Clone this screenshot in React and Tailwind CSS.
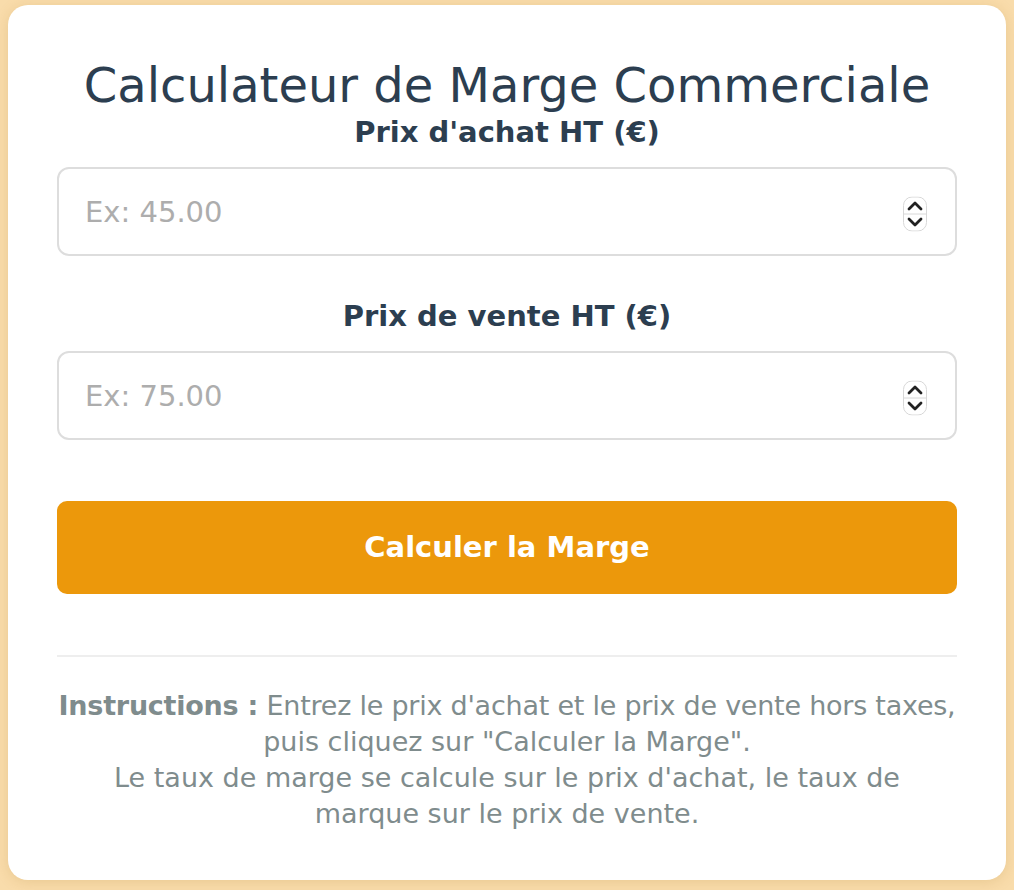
import { useState } from "react";

const Spinner = () => (
  <svg
    width="24"
    height="35"
    viewBox="0 0 24 35"
    className="pointer-events-none absolute right-[30px] top-1/2 -translate-y-1/2 mt-[2px]"
  >
    <rect x="0.5" y="0.5" width="23" height="34" rx="8.5" fill="#ffffff" stroke="#d8d8d8" />
    <line x1="1" y1="17.5" x2="23" y2="17.5" stroke="#d8d8d8" strokeWidth="1" />
    <path d="M6 12.5 L12 6.5 L18 12.5" fill="none" stroke="#222222" strokeWidth="2.8" strokeLinecap="round" strokeLinejoin="round" />
    <path d="M6 22.5 L12 28.5 L18 22.5" fill="none" stroke="#222222" strokeWidth="2.8" strokeLinecap="round" strokeLinejoin="round" />
  </svg>
);

const Field = ({ label, placeholder, value, onChange, className }) => (
  <div className={className}>
    <label className="block text-center text-[29px] leading-[38px] font-bold text-[#2c3e50] mb-[16px]">
      {label}
    </label>
    <div className="relative">
      <input
        type="text"
        inputMode="decimal"
        value={value}
        onChange={(e) => onChange(e.target.value)}
        placeholder={placeholder}
        className="block w-full h-[89px] rounded-[12px] border-2 border-[#dddddd] bg-white pl-[26px] pr-[70px] text-[29px] text-[#2c3e50] placeholder:text-[#adadad] outline-none"
      />
      <Spinner />
    </div>
  </div>
);

export default function App() {
  const [achat, setAchat] = useState("");
  const [vente, setVente] = useState("");

  return (
    <div className="min-h-screen bg-[#f9dcab] px-2 pt-[5px] pb-[10px] font-['DejaVu_Sans',sans-serif]">
      <div className="rounded-[20px] bg-white px-[49px] pt-[52px] pb-[48px] shadow-[0_2px_14px_rgba(160,110,30,0.18)]">
        <h1 className="text-center text-[48px] leading-[56px] font-normal text-[#2c3e50]">
          Calculateur de Marge Commerciale
        </h1>

        <Field
          label="Prix d'achat HT (€)"
          placeholder="Ex: 45.00"
          value={achat}
          onChange={setAchat}
        />
        <Field
          className="mt-[41px]"
          label="Prix de vente HT (€)"
          placeholder="Ex: 75.00"
          value={vente}
          onChange={setVente}
        />

        <button
          type="button"
          className="mt-[61px] block w-full h-[93px] rounded-[10px] bg-[#ec980b] text-white text-[29px] font-bold"
        >
          Calculer la Marge
        </button>

        <div className="mt-[61px] h-[2px] bg-[#eeeeee]" />

        <p className="mt-[31px] text-center text-[27px] leading-[36px] text-[#7f8c8d]">
          <span className="whitespace-nowrap tracking-[-0.24px]">
            <strong className="font-bold">Instructions :</strong> Entrez le prix d'achat et le prix de vente hors taxes,
          </span>
          <br />
          <span className="whitespace-nowrap">puis cliquez sur "Calculer la Marge".</span>
          <br />
          <span className="whitespace-nowrap">Le taux de marge se calcule sur le prix d'achat, le taux de</span>
          <br />
          <span className="whitespace-nowrap">marque sur le prix de vente.</span>
        </p>
      </div>
    </div>
  );
}
